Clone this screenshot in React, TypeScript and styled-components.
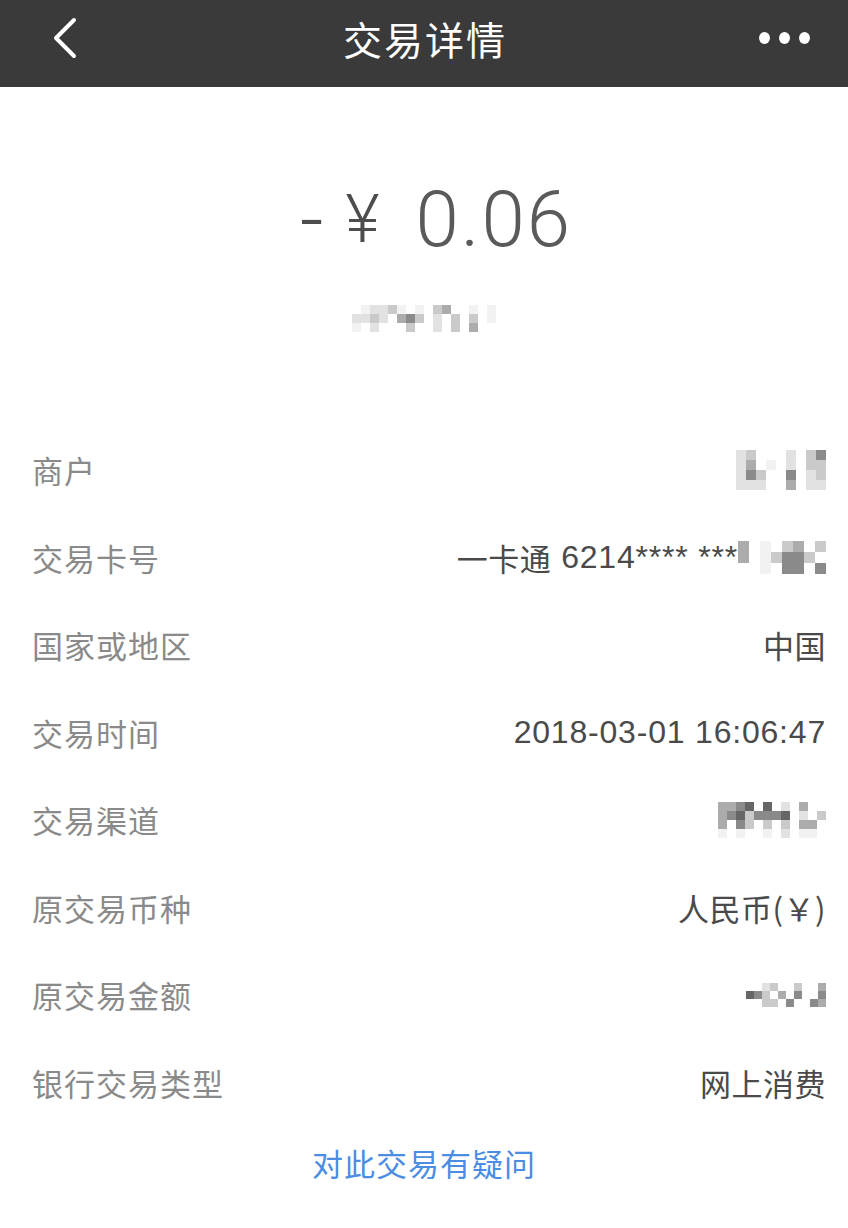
import React from "react";
import styled, { createGlobalStyle } from "styled-components";

const GlobalStyle = createGlobalStyle`
  html, body {
    margin: 0;
    padding: 0;
    background: #ffffff;
  }
  body {
    font-family: "Noto Sans CJK SC", "Noto Sans", sans-serif;
  }
`;

const Page = styled.div`
  width: 848px;
  min-height: 1228px;
  background: #ffffff;
  display: flex;
  flex-direction: column;
`;

const NavBar = styled.header`
  height: 87px;
  box-sizing: border-box;
  padding: 0 38px 11px 50px;
  background: #3a3a3a;
  display: flex;
  align-items: center;
  justify-content: space-between;
`;

const NavTitle = styled.h1`
  margin: 0;
  font-size: 39px;
  font-weight: 400;
  color: #ffffff;
  letter-spacing: 2px;
`;

const NavButton = styled.div<{ $end?: boolean }>`
  width: ${(p) => (p.$end ? 60 : 50)}px;
  height: 50px;
  display: flex;
  align-items: center;
  justify-content: ${(p) => (p.$end ? "flex-end" : "flex-start")};
`;

const Dot = styled.span`
  width: 12px;
  height: 12px;
  border-radius: 50%;
  background: #ffffff;
  margin-left: 9px;
`;

const AmountSection = styled.section`
  height: 339px;
  display: flex;
  flex-direction: column;
  align-items: center;
  padding-top: 93px;
  box-sizing: border-box;
`;

const Amount = styled.div`
  font-family: Roboto, "Liberation Sans", sans-serif;
  font-weight: 300;
  font-size: 78px;
  height: 80px;
  color: #4d4d4d;
  display: flex;
  align-items: center;
  padding-left: 24px;
`;

const AmountSign = styled.span<{ $gap: number; $size: number }>`
  font-size: ${(p) => p.$size}px;
  line-height: 80px;
  margin-right: ${(p) => p.$gap}px;
`;

const AmountDigits = styled.span`
  color: #5a5a5a;
  line-height: 80px;
  letter-spacing: 2px;
`;

const SubLine = styled.div`
  margin-top: 45px;
  padding-left: 8px;
`;

const Rows = styled.div`
  display: flex;
  flex-direction: column;
`;

const Row = styled.div`
  height: 87.5px;
  padding: 0 22px 0 32px;
  display: flex;
  align-items: center;
  justify-content: space-between;
`;

const Label = styled.span`
  font-size: 31px;
  color: #8a8a8a;
  letter-spacing: 1px;
`;

const Value = styled.span`
  font-size: 31px;
  color: #4a4a4a;
  letter-spacing: 0.5px;
  display: flex;
  align-items: center;
`;

const Numbers = styled.span`
  font-family: "Liberation Sans", Arial, sans-serif;
  font-size: 32px;
  letter-spacing: 0.8px;
  margin-left: 10px;
`;

const Link = styled.a`
  margin-top: 15px;
  align-self: center;
  font-size: 31px;
  line-height: 44px;
  color: #4a8de2;
  letter-spacing: 1px;
  text-decoration: none;
`;

const Grid = styled.div<{ $cols: number; $cell: number; $rowsCount: number }>`
  display: grid;
  grid-template-columns: repeat(${(p) => p.$cols}, ${(p) => p.$cell}px);
  grid-template-rows: repeat(${(p) => p.$rowsCount}, ${(p) => p.$cell}px);
`;

const Cell = styled.span<{ $shade: string }>`
  background: ${(p) => p.$shade};
`;

const shades: Record<string, string> = {
  ".": "transparent",
  "1": "#f2f2f2",
  "2": "#e2e2e2",
  "3": "#cacaca",
  "4": "#acacac",
  "5": "#8a8a8a",
  "6": "#666666",
};

const Mosaic: React.FC<{ pattern: string[]; cell: number }> = ({ pattern, cell }) => {
  const cols = pattern[0].length;
  return (
    <Grid $cols={cols} $cell={cell} $rowsCount={pattern.length}>
      {pattern.join("").split("").map((c, i) => (
        <Cell key={i} $shade={shades[c]} />
      ))}
    </Grid>
  );
};

const BackIcon = () => (
  <svg width="30" height="44" viewBox="0 0 30 44">
    <polyline
      points="24,4 6,22 24,40"
      fill="none"
      stroke="#ffffff"
      strokeWidth="4"
      strokeLinecap="round"
      strokeLinejoin="round"
    />
  </svg>
);

const subPattern = [
  ".12231.1.34..1.1.",
  "2232.453.2.3.3.1.",
  "1.2...3..2.3.4...",
];

const merchantPattern = [
  "23...2.35",
  "24.1.2.33",
  "253..5.23",
  "222..4.22",
];

const cardPattern = [
  "4.1.34.3",
  "4.13553.",
  "..1.55.5",
];

const channelPattern = [
  "4456.6.2.4..",
  "45635556.2.3",
  "4.53.3.3.44.",
  "1.1..1.2.11.",
];

const originPattern = [
  "..23..3..4",
  "653.4.5..5",
  "..33.5..54",
];

const rows: { label: string; value: React.ReactNode }[] = [
  { label: "商户", value: <Mosaic pattern={merchantPattern} cell={10} /> },
  {
    label: "交易卡号",
    value: (
      <>
        一卡通<Numbers>6214**** ***</Numbers>
        <Mosaic pattern={cardPattern} cell={11} />
      </>
    ),
  },
  { label: "国家或地区", value: "中国" },
  { label: "交易时间", value: <Numbers>2018-03-01 16:06:47</Numbers> },
  { label: "交易渠道", value: <Mosaic pattern={channelPattern} cell={9} /> },
  { label: "原交易币种", value: "人民币(￥)" },
  { label: "原交易金额", value: <Mosaic pattern={originPattern} cell={8} /> },
  { label: "银行交易类型", value: "网上消费" },
];

const App: React.FC = () => {
  return (
    <Page>
      <GlobalStyle />
      <NavBar>
        <NavButton>
          <BackIcon />
        </NavButton>
        <NavTitle>交易详情</NavTitle>
        <NavButton $end>
          <Dot />
          <Dot />
          <Dot />
        </NavButton>
      </NavBar>
      <AmountSection>
        <Amount>
          <AmountSign $gap={22} $size={82}>-</AmountSign>
          <AmountSign $gap={36} $size={66}>¥</AmountSign>
          <AmountDigits>0.06</AmountDigits>
        </Amount>
        <SubLine>
          <Mosaic pattern={subPattern} cell={9} />
        </SubLine>
      </AmountSection>
      <Rows>
        {rows.map((r) => (
          <Row key={r.label}>
            <Label>{r.label}</Label>
            <Value>{r.value}</Value>
          </Row>
        ))}
      </Rows>
      <Link>对此交易有疑问</Link>
    </Page>
  );
};

export default App;
